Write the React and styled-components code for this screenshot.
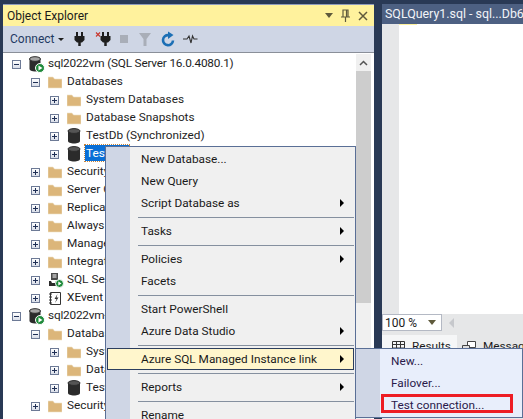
import styled, { createGlobalStyle } from 'styled-components';

const GlobalStyle = createGlobalStyle`
    html, body {
        margin: 0;
        padding: 0;
        height: 100%;
        overflow: hidden;
        background: #293955;
    }
    #root {
        height: 100%;
    }
`;

const Page = styled.div`
    position: relative;
    width: 523px;
    height: 419px;
    overflow: hidden;
    display: grid;
    grid-template-columns: 371px 1fr;
    column-gap: 8px;
    padding: 4px 0 0 3px;
    box-sizing: border-box;
    background: #293955;
    font-family: Roboto, "Noto Sans", "Liberation Sans", sans-serif;
    font-size: 11.8px;
    color: #1e1e1e;
`;

const Panel = styled.div`
    display: flex;
    flex-direction: column;
    min-height: 0;
    border-top: 1px solid #8e9bbc;
`;

const TitleBar = styled.div`
    height: 21px;
    flex: none;
    display: flex;
    align-items: center;
    padding: 0 6px 0 4px;
    background: #fff29d;
    font-size: 12px;
    color: #1a1a1a;
`;

const TitleText = styled.span`
    flex: 1;
`;

const TitleButtons = styled.div`
    display: flex;
    align-items: center;
    gap: 8px;
`;

const Toolbar = styled.div`
    height: 26px;
    flex: none;
    display: flex;
    align-items: center;
    padding-left: 7px;
    background: #cfd6e5;
    border-bottom: 1px solid #8a8f99;
    box-sizing: content-box;
`;

const ConnectButton = styled.div`
    display: flex;
    align-items: center;
    gap: 4px;
    width: 59px;
    font-size: 12px;
    color: #1f3a63;
`;

const Caret = styled.span`
    width: 0;
    height: 0;
    border-left: 3px solid transparent;
    border-right: 3px solid transparent;
    border-top: 3px solid #1e1e1e;
`;

const ToolSlot = styled.span`
    display: flex;
    margin-left: ${p => p.$gap}px;
`;

const TreeArea = styled.div`
    flex: 1;
    display: flex;
    min-height: 0;
    background: #fff;
`;

const Tree = styled.div`
    flex: 1;
    padding-top: 2px;
    overflow: hidden;
`;

const Row = styled.div`
    height: 18px;
    display: flex;
    align-items: center;
    padding-left: ${p => 9 + p.$level * 19}px;
    white-space: nowrap;
`;

const Toggle = styled.span`
    width: 9px;
    height: 9px;
    flex: none;
    box-sizing: border-box;
    position: relative;
    margin-right: 8px;
    border: 1px solid #6d7a96;
    background: linear-gradient(#fff, #d8dde8);

    &::before {
        content: "";
        position: absolute;
        left: 1px;
        right: 1px;
        top: 3px;
        height: 1px;
        background: #1f2f55;
    }

    ${p => p.$plus && `
        &::after {
            content: "";
            position: absolute;
            top: 1px;
            bottom: 1px;
            left: 3px;
            width: 1px;
            background: #1f2f55;
        }
    `}
`;

const IconSlot = styled.span`
    width: 16px;
    height: 16px;
    flex: none;
    display: flex;
    align-items: center;
    margin-right: 2px;
`;

const Label = styled.span`
    padding: 0 1px;
    margin-bottom: 2px;
    line-height: 16px;
    ${p => p.$tight && 'letter-spacing: -0.2px;'}
    ${p => p.$selected && `
        background: #0a6fd6;
        color: #fff;
        outline: 1px dotted #c9853a;
        width: 42px;
    `}
`;

const Scrollbar = styled.div`
    width: 15px;
    margin-top: 1px;
    margin-right: 3px;
    flex: none;
    display: flex;
    flex-direction: column;
    background: #f0f0f0;
`;

const ScrollButton = styled.div`
    height: 17px;
    display: flex;
    align-items: center;
    justify-content: center;
    background: #f0f0f0;
`;

const ScrollThumb = styled.div`
    height: 232px;
    background: #cdcdcd;
`;

const RightPane = styled.div`
    display: flex;
    flex-direction: column;
    min-height: 0;
    background: #fff;
`;

const TabTitle = styled.div`
    height: 20px;
    flex: none;
    padding-left: 3px;
    background: #4d6082;
    color: #f2f4f8;
    font-size: 12.4px;
    line-height: 19px;
    white-space: nowrap;
    overflow: hidden;
`;

const Editor = styled.div`
    height: 290px;
    flex: none;
    display: flex;
`;

const EditorMargin = styled.div`
    width: 17px;
    background: #e6e7e8;
`;

const EditorBody = styled.div`
    flex: 1;
    background: #fff;
`;

const ChangeMark = styled.div`
    width: 18px;
    height: 1px;
    background: #fff29d;
`;

const StatusRow = styled.div`
    height: 21px;
    flex: none;
    display: flex;
    align-items: flex-start;
    gap: 7px;
    background: #e6e7e8;
`;

const ZoomBox = styled.div`
    width: 60px;
    height: 17px;
    display: flex;
    align-items: center;
    justify-content: space-between;
    padding: 0 5px 0 2px;
    box-sizing: border-box;
    background: #fff;
    border: 1px solid #b4b9c4;
    font-size: 12px;
    color: #1a1a1a;
`;

const ScrollLeft = styled.span`
    width: 0;
    height: 0;
    margin-top: 4px;
    border-top: 5px solid transparent;
    border-bottom: 5px solid transparent;
    border-right: 5px solid #c6c8cc;
`;

const ResultTabs = styled.div`
    flex: 1;
    display: flex;
    align-items: flex-start;
    background: #e6e7e8;
`;

const ResultTab = styled.div`
    display: flex;
    align-items: center;
    gap: 7px;
    height: 22px;
    padding: 0 ${p => (p.$active ? 6 : 9)}px 0 ${p => (p.$active ? 10 : 5)}px;
    box-sizing: border-box;
    background: ${p => (p.$active ? '#f5f6f7' : 'transparent')};
    color: #1a1a1a;
    white-space: nowrap;
`;

const Menu = styled.div`
    position: absolute;
    left: ${p => p.$left}px;
    top: ${p => p.$top}px;
    width: ${p => p.$width}px;
    box-sizing: border-box;
    border: 1px solid #5a6f96;
    padding: 1px;
    background: ${p => p.$bg};
`;

const MenuGutter = styled.div`
    position: absolute;
    left: 0;
    top: 0;
    bottom: 0;
    width: ${p => p.$width}px;
    background: #cfd6e5;
`;

const MenuItem = styled.div`
    position: relative;
    height: 22px;
    display: flex;
    align-items: center;
    justify-content: space-between;
    padding: 0 10px 0 ${p => p.$indent}px;
    box-sizing: border-box;
    white-space: nowrap;
    color: ${p => (p.$purple ? '#2a1a4a' : '#1a1a1a')};
    ${p => p.$hover && `
        background: #fff6cc;
        outline: 1px solid #2c3e5e;
        outline-offset: -1px;
    `}
`;

const MenuSep = styled.div`
    position: relative;
    height: 6px;
    display: flex;
    align-items: center;
    margin-left: 31px;

    &::after {
        content: "";
        flex: 1;
        height: 1px;
        background: #85909f;
    }
`;

const Arrow = styled.span`
    width: 0;
    height: 0;
    border-top: 4px solid transparent;
    border-bottom: 4px solid transparent;
    border-left: 4px solid #000;
`;

const Callout = styled.div`
    position: absolute;
    left: 381px;
    top: 394px;
    width: 132px;
    height: 19px;
    box-sizing: border-box;
    border: 3px solid #ed1c24;
`;

const Folder = () => (
    <svg width="14" height="13" viewBox="0 0 14 13">
        <path d="M0 1h5l1.500 2H14v9H0z" fill="#dcb67a" stroke="#efe3c8" strokeWidth="0.6" />
    </svg>
);

const Cylinder = () => (
    <svg width="14" height="16" viewBox="0 0 14 16">
        <path d="M1 3v10c0 1.500 2.600 2.500 6 2.500s6-1 6-2.500V3z" fill="#2b2b2b" />
        <ellipse cx="7" cy="3" rx="6" ry="2.400" fill="#555" stroke="#2b2b2b" />
    </svg>
);

const ServerIcon = () => (
    <svg width="16" height="17" viewBox="0 0 16 17">
        <path d="M0.500 3v10c0 1.500 2.400 2.500 5.500 2.500s5.500-1 5.500-2.500V3z" fill="#2b2b2b" />
        <ellipse cx="6" cy="3" rx="5.500" ry="2.300" fill="#a5a5a5" stroke="#2b2b2b" />
        <circle cx="11" cy="12" r="4.500" fill="#1f8a3b" stroke="#fff" />
        <path d="M9.500 9.500v5l4-2.500z" fill="#fff" />
    </svg>
);

const AgentIcon = () => (
    <svg width="16" height="16" viewBox="0 0 16 16">
        <path d="M3 1h7v7H3z" fill="#4a4a4a" />
        <path d="M4.500 3h4M4.500 5h4" stroke="#fff" />
        <path d="M1 9h2l1 2-1 2h-2zM10 9H8l-1 2 1 2" fill="#2b2b2b" />
        <path d="M1 11h8v3H1z" fill="#2b2b2b" />
        <circle cx="11.500" cy="11.500" r="4" fill="#1f8a3b" stroke="#fff" />
        <path d="M10.300 9.500v4l3.200-2z" fill="#fff" />
    </svg>
);

const EventIcon = () => (
    <svg width="14" height="15" viewBox="0 0 14 15">
        <path d="M2.500 1.500h10v12h-10z" fill="#fff" stroke="#333" />
        <path d="M1 3h3M1 6h3M1 9h3M1 12h3" stroke="#333" />
        <path d="M9.500 3L6.500 8h2L7 12l3.500-5.500h-2z" fill="#333" />
    </svg>
);

const Plug = ({ cross }) => (
    <svg width="18" height="16" viewBox="0 0 18 16">
        <path d="M8 1v4M13 1v4" stroke="#1e1e1e" strokeWidth="2" />
        <path d="M5.500 5h10v4l-2.500 2.500h-5l-2.500-2.500z" fill="#1e1e1e" />
        <path d="M10.500 11v4" stroke="#1e1e1e" strokeWidth="2.500" />
        {cross && <path d="M1 1.500l4 4M5 1.500l-4 4" stroke="#c8352b" strokeWidth="1.100" />}
    </svg>
);

const Stop = () => (
    <svg width="16" height="16" viewBox="0 0 16 16">
        <path d="M4 4h8v8H4z" fill="#a9aeb8" />
    </svg>
);

const FilterIcon = () => (
    <svg width="16" height="16" viewBox="0 0 16 16">
        <path d="M2 2h12L9.500 8v7h-3V8z" fill="#a9aeb8" />
    </svg>
);

const Refresh = () => (
    <svg width="16" height="16" viewBox="0 0 16 16">
        <path d="M13 9.500A5 5 0 1 1 8.500 4.200" fill="none" stroke="#1c6fb5" strokeWidth="2.600" />
        <path d="M8 0.500l5.500 3.500L8 8z" fill="#1c6fb5" />
    </svg>
);

const Activity = () => (
    <svg width="16" height="14" viewBox="0 0 16 14">
        <path d="M1 7h4l2-3 2 7 1.500-7 1.500 3h3.500" fill="none" stroke="#333" strokeWidth="1.100" />
    </svg>
);

const Pin = () => (
    <svg width="9" height="13" viewBox="0 0 9 13">
        <path d="M2 1h5v7H2zM0 8h9M4.500 8v5M5.500 1v7" fill="none" stroke="#5f5a3c" strokeWidth="1.200" />
    </svg>
);

const Close = () => (
    <svg width="10" height="10" viewBox="0 0 10 10">
        <path d="M1 1l8 8M9 1l-8 8" stroke="#5f5a3c" strokeWidth="1.500" />
    </svg>
);

const DropCaret = () => (
    <svg width="8" height="5" viewBox="0 0 8 5">
        <path d="M0 0h8L4 5z" fill="#5f5a3c" />
    </svg>
);

const ChevronUp = () => (
    <svg width="9" height="6" viewBox="0 0 9 6">
        <path d="M1 5l3.500-3.500L8 5" fill="none" stroke="#555" strokeWidth="1.500" />
    </svg>
);

const GridIcon = () => (
    <svg width="13" height="13" viewBox="0 0 13 13">
        <path d="M.5 1.500h12v10H.5zM.5 4.500h12M.5 8h12M4.500 1.500v10M8.500 1.500v10" fill="none" stroke="#333" />
    </svg>
);

const MessageIcon = () => (
    <svg width="14" height="13" viewBox="0 0 14 13">
        <path d="M5.500 1.500h8v6h-8z" fill="#fff" stroke="#444" />
        <path d="M.5 5.500h7v7h-7z" fill="#ddd" stroke="#444" />
    </svg>
);

const treeRows = [
    { level: 0, open: true, tight: true, icon: <ServerIcon />, text: 'sql2022vm (SQL Server 16.0.4080.1)' },
    { level: 1, open: true, icon: <Folder />, text: 'Databases' },
    { level: 2, icon: <Folder />, text: 'System Databases' },
    { level: 2, icon: <Folder />, text: 'Database Snapshots' },
    { level: 2, icon: <Cylinder />, text: 'TestDb (Synchronized)' },
    { level: 2, icon: <Cylinder />, text: 'TestDb6', selected: true },
    { level: 1, icon: <Folder />, text: 'Security' },
    { level: 1, icon: <Folder />, text: 'Server Objects' },
    { level: 1, icon: <Folder />, text: 'Replication' },
    { level: 1, icon: <Folder />, text: 'Always On' },
    { level: 1, icon: <Folder />, text: 'Management' },
    { level: 1, icon: <Folder />, text: 'Integration' },
    { level: 1, icon: <AgentIcon />, text: 'SQL Server Agent' },
    { level: 1, icon: <EventIcon />, text: 'XEvent Profiler' },
    { level: 0, open: true, tight: true, icon: <ServerIcon />, text: 'sql2022vm-2 (SQL Server)' },
    { level: 1, open: true, icon: <Folder />, text: 'Databases' },
    { level: 2, icon: <Folder />, text: 'System Databases' },
    { level: 2, icon: <Folder />, text: 'Database Snapshots' },
    { level: 2, icon: <Cylinder />, text: 'TestDb' },
    { level: 1, icon: <Folder />, text: 'Security' },
];

const menuItems = [
    { text: 'New Database...' },
    { text: 'New Query' },
    { text: 'Script Database as', more: true },
    { sep: true },
    { text: 'Tasks', more: true },
    { sep: true },
    { text: 'Policies', more: true },
    { text: 'Facets' },
    { sep: true },
    { text: 'Start PowerShell' },
    { text: 'Azure Data Studio', more: true },
    { sep: true },
    { text: 'Azure SQL Managed Instance link', more: true, hover: true },
    { sep: true },
    { text: 'Reports', more: true },
    { sep: true },
    { text: 'Rename' },
];

export default function App() {
    return <Page>
        <GlobalStyle />
        <Panel>
            <TitleBar>
                <TitleText>Object Explorer</TitleText>
                <TitleButtons>
                    <DropCaret />
                    <Pin />
                    <Close />
                </TitleButtons>
            </TitleBar>
            <Toolbar>
                <ConnectButton>Connect <Caret /></ConnectButton>
                <ToolSlot $gap={0}><Plug /></ToolSlot>
                <ToolSlot $gap={8}><Plug cross /></ToolSlot>
                <ToolSlot $gap={3}><Stop /></ToolSlot>
                <ToolSlot $gap={5}><FilterIcon /></ToolSlot>
                <ToolSlot $gap={7}><Refresh /></ToolSlot>
                <ToolSlot $gap={6}><Activity /></ToolSlot>
            </Toolbar>
            <TreeArea>
                <Tree>
                    {treeRows.map((row, i) => <Row key={i} $level={row.level}>
                        <Toggle $plus={!row.open} />
                        <IconSlot>{row.icon}</IconSlot>
                        <Label $selected={row.selected} $tight={row.tight}>{row.text}</Label>
                    </Row>)}
                </Tree>
                <Scrollbar>
                    <ScrollButton><ChevronUp /></ScrollButton>
                    <ScrollThumb />
                </Scrollbar>
            </TreeArea>
        </Panel>
        <RightPane>
            <TabTitle>SQLQuery1.sql - sql...Db6 (</TabTitle>
            <Editor>
                <EditorMargin />
                <EditorBody><ChangeMark /></EditorBody>
            </Editor>
            <StatusRow>
                <ZoomBox>100 % <DropCaret /></ZoomBox>
                <ScrollLeft />
            </StatusRow>
            <ResultTabs>
                <ResultTab $active><GridIcon />Results</ResultTab>
                <ResultTab><MessageIcon />Messages</ResultTab>
            </ResultTabs>
        </RightPane>

        <Menu $left={105} $top={146} $width={251} $bg="#f0f0f0">
            <MenuGutter $width={24} />
            {menuItems.map((item, i) => item.sep
                ? <MenuSep key={i} />
                : <MenuItem key={i} $indent={34} $hover={item.hover}>
                    {item.text}
                    {item.more && <Arrow />}
                </MenuItem>)}
        </Menu>
        <Menu $left={355} $top={348} $width={168} $bg="#e8eefb">
            <MenuGutter $width={24} />
            <MenuItem $indent={34} $purple>New...</MenuItem>
            <MenuItem $indent={34} $purple>Failover...</MenuItem>
            <MenuItem $indent={34} $purple>Test connection...</MenuItem>
        </Menu>
        <Callout />
    </Page>;
}
